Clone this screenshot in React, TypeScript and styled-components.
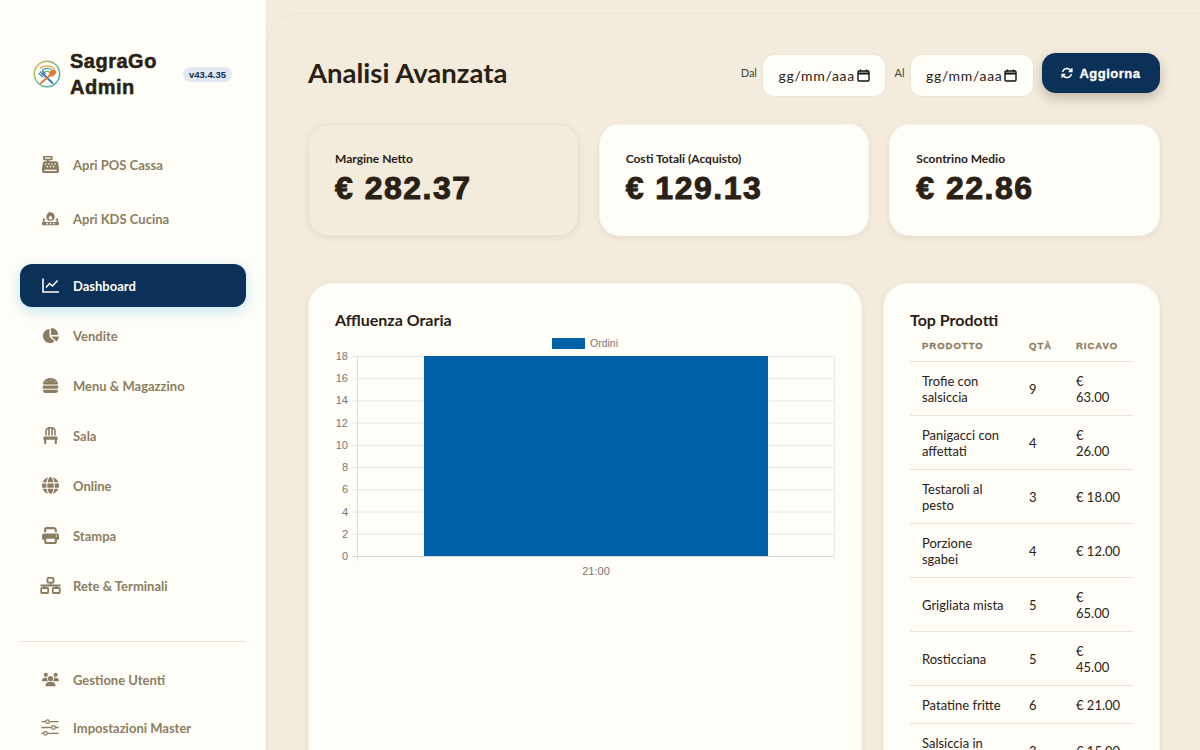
import React from "react";
import styled, { createGlobalStyle } from "styled-components";
import {
  FaBurger,
  FaCashRegister,
  FaChair,
  FaChartPie,
  FaFireBurner,
  FaGlobe,
  FaPrint,
  FaRotate,
  FaUsers,
} from "react-icons/fa6";

const BODY_FONT = `Lato, "Noto Sans", sans-serif`;
const HEAVY_FONT = `"Liberation Sans", Arial, sans-serif`;
const SAND = "#f3ebdb";

const GlobalStyle = createGlobalStyle`
  html, body {
    margin: 0;
    height: 100%;
    overflow: hidden;
    background: ${SAND};
  }
  * { box-sizing: border-box; }
`;

const Shell = styled.div`
  display: flex;
  width: 1200px;
  height: 750px;
  overflow: hidden;
  background: ${SAND};
  font-family: ${BODY_FONT};
  color: #2a2114;
`;

const Sidebar = styled.aside`
  flex: 0 0 267px;
  padding: 0 20px;
  background: #fffdf8;
  border-right: 1px solid #ebe4d6;
`;

const Brand = styled.div`
  display: flex;
  align-items: center;
  height: 143px;
  padding: 5px 0 0 13px;
`;

const BrandName = styled.div`
  width: 113px;
  margin-left: 9px;
  font-family: ${HEAVY_FONT};
  font-size: 20px;
  font-weight: 700;
  line-height: 26px;
  letter-spacing: 0.5px;
  -webkit-text-stroke: 0.5px #2a2114;
`;

const Version = styled.span`
  padding: 2px 6px;
  border-radius: 8px;
  background: #e2e8f0;
  color: #0b3158;
  font-family: ${HEAVY_FONT};
  font-size: 9.5px;
  font-weight: 700;
`;

const NavGroup = styled.nav<{ $gap: number }>`
  display: flex;
  flex-direction: column;
  gap: ${(p) => p.$gap}px;
`;

const NavItem = styled.div<{ $active?: boolean }>`
  display: flex;
  align-items: center;
  height: 43px;
  padding-left: 20px;
  border-radius: 12px;
  font-size: 13px;
  font-weight: 700;
  color: ${(p) => (p.$active ? "#fffdf8" : "#8c7d62")};
  background: ${(p) => (p.$active ? "#0b3158" : "transparent")};
  box-shadow: ${(p) => (p.$active ? "0 4px 14px rgba(77, 184, 224, 0.35)" : "none")};
`;

const IconSlot = styled.span`
  display: flex;
  justify-content: center;
  flex: 0 0 21px;
  margin-right: 12px;
  font-size: 17px;

  svg {
    height: 17px;
    width: auto;
  }
`;

const Divider = styled.hr`
  margin: 34px 0 16px;
  border: 0;
  border-top: 1px solid #ebe4d6;
`;

const Main = styled.main`
  flex: 1;
  margin-top: 13px;
  padding: 39px 40px 0;
  background: ${SAND};
  border-top: 1px solid #ebe4d6;
  border-left: 1px solid #ebe4d6;
  border-top-left-radius: 30px;
  overflow: hidden;
`;

const TopBar = styled.header`
  display: flex;
  align-items: flex-start;
  justify-content: space-between;
  height: 44px;
`;

const Title = styled.h1`
  margin: 0;
  font-size: 27.5px;
  font-weight: 700;
  line-height: 40px;
  color: #2a2114;
`;

const Filters = styled.div`
  display: flex;
  align-items: flex-start;
`;

const FilterLabel = styled.span`
  margin: 13px 5px 0 0;
  font-size: 11px;
  line-height: 14px;
  color: #4a4436;
`;

const DateField = styled.div`
  display: flex;
  align-items: center;
  justify-content: center;
  gap: 2px;
  width: 124.5px;
  height: 43px;
  margin: 1px 8px 0 0;
  background: #fffdf8;
  border: 1px solid #ebe4d6;
  border-radius: 12px;
  font-size: 14px;
  letter-spacing: 0.7px;
  color: #2a2114;
`;

const RefreshButton = styled.button`
  display: flex;
  align-items: center;
  justify-content: center;
  gap: 6px;
  width: 118px;
  height: 40px;
  padding: 0;
  border: 0;
  border-radius: 14px;
  background: #0b3158;
  color: #fffdf8;
  font-family: ${HEAVY_FONT};
  font-size: 13px;
  font-weight: 700;
  letter-spacing: 0.5px;
  -webkit-text-stroke: 0.3px #fffdf8;
  box-shadow: 0 5px 12px rgba(42, 33, 20, 0.25);
`;

const Stats = styled.section`
  display: grid;
  grid-template-columns: repeat(3, 1fr);
  gap: 20px;
  margin-top: 27px;
`;

const StatCard = styled.div<{ $plain?: boolean }>`
  height: 112px;
  padding: 26px 26px 0;
  background: ${(p) => (p.$plain ? SAND : "#fffdf8")};
  border: 1px solid ${(p) => (p.$plain ? "#e9e1d0" : "#f8f4ea")};
  border-radius: 20px;
  box-shadow: 0 2px 6px rgba(42, 33, 20, 0.07);
`;

const StatLabel = styled.div`
  font-size: 12px;
  font-weight: 700;
  line-height: 15px;
  color: #2a2114;
`;

const StatValue = styled.div`
  margin-top: 4px;
  font-family: ${HEAVY_FONT};
  font-size: 32px;
  font-weight: 700;
  line-height: 37px;
  letter-spacing: 1.5px;
  -webkit-text-stroke: 1px #2a2114;
`;

const Panels = styled.section`
  display: grid;
  grid-template-columns: 554px 277px;
  gap: 21px;
  margin-top: 47px;
`;

const Panel = styled.div`
  height: 520px;
  padding: 27px 26px 0;
  background: #fffdf8;
  border: 1px solid #f8f4ea;
  border-radius: 24px;
  box-shadow: 0 2px 6px rgba(42, 33, 20, 0.07);
  overflow: hidden;
`;

const PanelTitle = styled.h2`
  margin: 0;
  font-size: 16px;
  font-weight: 700;
  line-height: 18px;
  color: #2a2114;
`;

const ChartSvg = styled.svg`
  display: block;
  margin-top: 7px;
`;

const Table = styled.table`
  width: 223px;
  margin-top: 2px;
  table-layout: fixed;
  border-collapse: collapse;
  font-size: 13px;
  color: #2a2114;
`;

const HeadCell = styled.th<{ $width: number }>`
  width: ${(p) => p.$width}px;
  padding: 9px 12px 10px;
  border-bottom: 1px solid #ebe4d6;
  font-family: ${HEAVY_FONT};
  font-size: 9.5px;
  font-weight: 700;
  letter-spacing: 1px;
  text-align: left;
  color: #8c7d62;
  -webkit-text-stroke: 0.3px #8c7d62;
`;

const Cell = styled.td`
  padding: 10.5px 12px;
  border-bottom: 1px solid #ebe4d6;
  line-height: 16px;
  white-space: pre;
`;

const ChartLineIcon = () => (
  <svg viewBox="0 -1 17 17" fill="none" stroke="currentColor" strokeWidth="1.6">
    <path d="M1 0.5V14H17" />
    <path d="M4 9.5L7.5 5.5L10.5 8L15.5 2.5" />
  </svg>
);

const NetworkIcon = () => (
  <svg viewBox="0 0 21 17" fill="none" stroke="currentColor" strokeWidth="1.8">
    <rect x="7.5" y="0.9" width="6" height="4.8" rx="0.8" />
    <path d="M0.5 8.5H20.5M10.5 5.8V8.5M4.5 8.5V11M16.5 8.5V11" />
    <rect x="1.2" y="11" width="7" height="5" rx="0.8" />
    <rect x="12.8" y="11" width="7" height="5" rx="0.8" />
  </svg>
);

const SlidersIcon = () => (
  <svg viewBox="0 0 17 16" fill="none" stroke="currentColor" strokeWidth="1.2">
    <path d="M0.5 2.5H4.5M8 2.5H16.5M0.5 8H10M13.5 8H16.5M0.5 13.5H2.5M6 13.5H16.5" />
    <circle cx="6.2" cy="2.5" r="1.7" />
    <circle cx="11.8" cy="8" r="1.7" />
    <circle cx="4.2" cy="13.5" r="1.7" />
  </svg>
);

const TOP_NAV = [
  { label: "Apri POS Cassa", icon: <FaCashRegister /> },
  { label: "Apri KDS Cucina", icon: <FaFireBurner /> },
];

const MAIN_NAV = [
  { label: "Dashboard", icon: <ChartLineIcon />, active: true },
  { label: "Vendite", icon: <FaChartPie /> },
  { label: "Menu & Magazzino", icon: <FaBurger /> },
  { label: "Sala", icon: <FaChair /> },
  { label: "Online", icon: <FaGlobe /> },
  { label: "Stampa", icon: <FaPrint /> },
  { label: "Rete & Terminali", icon: <NetworkIcon /> },
];

const BOTTOM_NAV = [
  { label: "Gestione Utenti", icon: <FaUsers /> },
  { label: "Impostazioni Master", icon: <SlidersIcon /> },
];

const STATS = [
  { label: "Margine Netto", value: "€ 282.37", plain: true },
  { label: "Costi Totali (Acquisto)", value: "€ 129.13" },
  { label: "Scontrino Medio", value: "€ 22.86" },
];

// gli a capo seguono quelli del riferimento
const PRODUCTS = [
  ["Trofie con\nsalsiccia", "9", "€\n63.00"],
  ["Panigacci con\naffettati", "4", "€\n26.00"],
  ["Testaroli al\npesto", "3", "€ 18.00"],
  ["Porzione\nsgabei", "4", "€ 12.00"],
  ["Grigliata mista", "5", "€\n65.00"],
  ["Rosticciana", "5", "€\n45.00"],
  ["Patatine fritte", "6", "€ 21.00"],
  ["Salsiccia in\numido", "3", "€ 15.00"],
];

const Logo = () => (
  <svg width="28" height="28" viewBox="0 0 28 28" fill="none">
    <defs>
      <linearGradient id="ring" x1="0" y1="0" x2="1" y2="1">
        <stop offset="0" stopColor="#f0b43c" />
        <stop offset="0.5" stopColor="#62bd7e" />
        <stop offset="1" stopColor="#3aa7cf" />
      </linearGradient>
    </defs>
    <circle cx="14" cy="14" r="12.7" stroke="url(#ring)" strokeWidth="1.5" />
    <path d="M7 8.5a11 11 0 0 1 15 .5" stroke="#e8a23c" strokeWidth="1.2" />
    <path d="M9 10.5a8 8 0 0 1 11 .3" stroke="#3fa7c9" strokeWidth="1.2" />
    <path d="M11 12.5a5 5 0 0 1 6 0" stroke="#6cbf6a" strokeWidth="1.2" />
    <path d="M9.5 13.5L19.5 23" stroke="#3d7fb5" strokeWidth="2" strokeLinecap="round" />
    <path d="M5.5 13l4.5 4M7 11.5l4.5 4M9 10.5l3.5 3.5" stroke="#3d7fb5" strokeWidth="1.1" />
    <path d="M18.5 14L8 23" stroke="#e57c2f" strokeWidth="2" strokeLinecap="round" />
    <ellipse cx="19.5" cy="13" rx="3" ry="3.8" fill="#e57c2f" transform="rotate(45 19.5 13)" />
  </svg>
);

const CalendarGlyph = () => (
  <svg width="13" height="13" viewBox="0 0 13 13" fill="none">
    <rect x="1" y="2" width="11" height="10" stroke="#111" strokeWidth="1.4" rx="1" />
    <path d="M1 4.5h11" stroke="#111" strokeWidth="2" />
    <path d="M3.5 0.5v2M9.5 0.5v2" stroke="#111" strokeWidth="1.2" />
  </svg>
);

// assi e griglia ricalcati sul grafico orario
const Chart = () => {
  const left = 22;
  const right = 499;
  const top = 20;
  const bottom = 220;
  const ticks = [18, 16, 14, 12, 10, 8, 6, 4, 2, 0];
  return (
    <ChartSvg width="500" height="250" viewBox="0 0 500 250">
      <rect x="217" y="2" width="33" height="11" fill="#0060a8" />
      <text x="255" y="11" fontSize="10.5" fill="#777" fontFamily={HEAVY_FONT}>
        Ordini
      </text>
      {ticks.map((t, i) => {
        const y = top + ((bottom - top) * i) / 9;
        return (
          <g key={t}>
            <line x1={left - 5} x2={right} y1={y + 0.5} y2={y + 0.5} stroke={t === 0 ? "#d8d8d8" : "#e8e8e8"} />
            <text x={left - 9} y={y + 4} fontSize="11" fill="#777" textAnchor="end" fontFamily={HEAVY_FONT}>
              {t}
            </text>
          </g>
        );
      })}
      <line x1={left + 0.5} x2={left + 0.5} y1={top} y2={bottom + 5} stroke="#dcdcdc" />
      <line x1={right + 0.5} x2={right + 0.5} y1={top} y2={bottom + 5} stroke="#e8e8e8" />
      <rect x="89" y={top} width="344" height={bottom - top} fill="#0060a8" />
      <text x="261" y="239" fontSize="11" fill="#777" textAnchor="middle" fontFamily={HEAVY_FONT}>
        21:00
      </text>
    </ChartSvg>
  );
};

const NavList = ({ items, gap }: { items: { label: string; icon: React.ReactNode; active?: boolean }[]; gap: number }) => (
  <NavGroup $gap={gap}>
    {items.map((item) => (
      <NavItem key={item.label} $active={item.active}>
        <IconSlot>{item.icon}</IconSlot>
        {item.label}
      </NavItem>
    ))}
  </NavGroup>
);

const TopNavSpacer = styled.div`
  height: 24px;
`;

export default function App() {
  return (
    <Shell>
      <GlobalStyle />
      <Sidebar>
        <Brand>
          <Logo />
          <BrandName>SagraGo Admin</BrandName>
          <Version>v43.4.35</Version>
        </Brand>
        <NavList items={TOP_NAV} gap={11} />
        <TopNavSpacer />
        <NavList items={MAIN_NAV} gap={7} />
        <Divider />
        <NavList items={BOTTOM_NAV} gap={5} />
      </Sidebar>
      <Main>
        <TopBar>
          <Title>Analisi Avanzata</Title>
          <Filters>
            <FilterLabel>Dal</FilterLabel>
            <DateField>
              gg/mm/aaa <CalendarGlyph />
            </DateField>
            <FilterLabel>Al</FilterLabel>
            <DateField>
              gg/mm/aaa <CalendarGlyph />
            </DateField>
            <RefreshButton>
              <FaRotate size={12} /> Aggiorna
            </RefreshButton>
          </Filters>
        </TopBar>
        <Stats>
          {STATS.map((s) => (
            <StatCard key={s.label} $plain={s.plain}>
              <StatLabel>{s.label}</StatLabel>
              <StatValue>{s.value}</StatValue>
            </StatCard>
          ))}
        </Stats>
        <Panels>
          <Panel>
            <PanelTitle>Affluenza Oraria</PanelTitle>
            <Chart />
          </Panel>
          <Panel>
            <PanelTitle>Top Prodotti</PanelTitle>
            <Table>
              <thead>
                <tr>
                  <HeadCell $width={107}>PRODOTTO</HeadCell>
                  <HeadCell $width={47}>QTÀ</HeadCell>
                  <HeadCell $width={69}>RICAVO</HeadCell>
                </tr>
              </thead>
              <tbody>
                {PRODUCTS.map(([name, qty, revenue]) => (
                  <tr key={name}>
                    <Cell>{name}</Cell>
                    <Cell>{qty}</Cell>
                    <Cell>{revenue}</Cell>
                  </tr>
                ))}
              </tbody>
            </Table>
          </Panel>
        </Panels>
      </Main>
    </Shell>
  );
}
